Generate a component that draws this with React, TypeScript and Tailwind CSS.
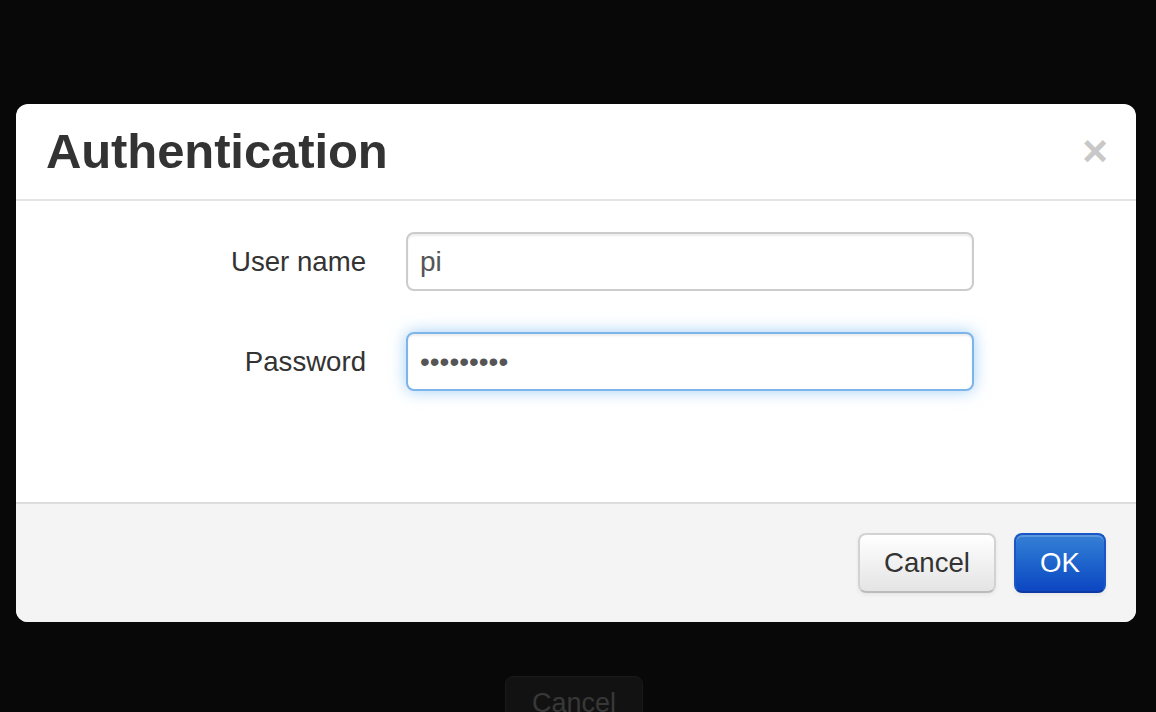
import React from "react";

const font = { fontFamily: '"Liberation Sans", Arial, Helvetica, sans-serif' };

function Field({ label, value, type, focused }: { label: string; value: string; type: string; focused?: boolean }) {
  return (
    <div className="flex items-center">
      <label className="w-[320px] text-right text-[27.6px] leading-[40px] text-[#333]">{label}</label>
      <input
        type={type}
        defaultValue={value}
        readOnly
        className={
          "ml-[40px] h-[59px] w-[568px] rounded-[8px] border-2 bg-white px-[12px] text-[28px] text-[#555] outline-none " +
          (focused
            ? "border-[#7db4ea] shadow-[inset_0_2px_2px_rgba(0,0,0,0.075),0_0_16px_rgba(82,168,236,0.55)]"
            : "border-[#cccccc] shadow-[inset_0_2px_2px_rgba(0,0,0,0.075)]")
        }
        style={font}
      />
    </div>
  );
}

export default function App() {
  return (
    <div className="relative h-[712px] w-[1156px] overflow-hidden bg-[#080808]" style={font}>
      {/* page content left under the backdrop */}
      <div className="absolute left-[505px] top-[676px] flex h-[60px] w-[138px] items-start justify-center rounded-[8px] border border-[#1a1a1a] bg-[#121212] pt-[8px] text-[27px] leading-[36px] text-[#383838]">
        Cancel
      </div>

      <div className="relative ml-[16px] mr-[20px] mt-[104px] overflow-hidden rounded-[12px] bg-white">
        <div className="flex h-[97px] items-center justify-between border-b-2 border-[#e5e5e5] pl-[30px] pr-[30px]">
          <h3 className="text-[49px] font-bold leading-none tracking-[-0.1px] text-[#333]">Authentication</h3>
          <span className="-mt-[2px] mr-[-2px] text-[44px] font-bold leading-none text-[#c8c8c8]">×</span>
        </div>

        <div className="flex h-[301px] flex-col gap-[41px] px-[30px] pt-[31px]">
          <Field label="User name" value="pi" type="text" />
          <Field label="Password" value="•••••••••" type="password" focused />
        </div>

        <div className="flex h-[120px] items-center justify-end gap-[18px] border-t-2 border-[#dddddd] bg-[#f4f4f4] px-[30px]">
          <button
            className="h-[60px] w-[138px] rounded-[8px] border-2 border-[#d2d2d2] border-b-[#bbbbbb] bg-gradient-to-b from-white to-[#e4e4e4] text-[27.6px] text-[#333] shadow-[inset_0_2px_0_rgba(255,255,255,0.2),0_2px_4px_rgba(0,0,0,0.06)]"
            style={font}
          >
            Cancel
          </button>
          <button
            className="h-[60px] w-[92px] rounded-[8px] border-2 border-[#1a56c4] border-b-[#0d3aa0] bg-gradient-to-b from-[#3580d6] to-[#0d45c2] text-[27.6px] text-white shadow-[inset_0_2px_0_rgba(255,255,255,0.2),0_2px_4px_rgba(0,0,0,0.06)]"
            style={font}
          >
            OK
          </button>
        </div>
      </div>
    </div>
  );
}
